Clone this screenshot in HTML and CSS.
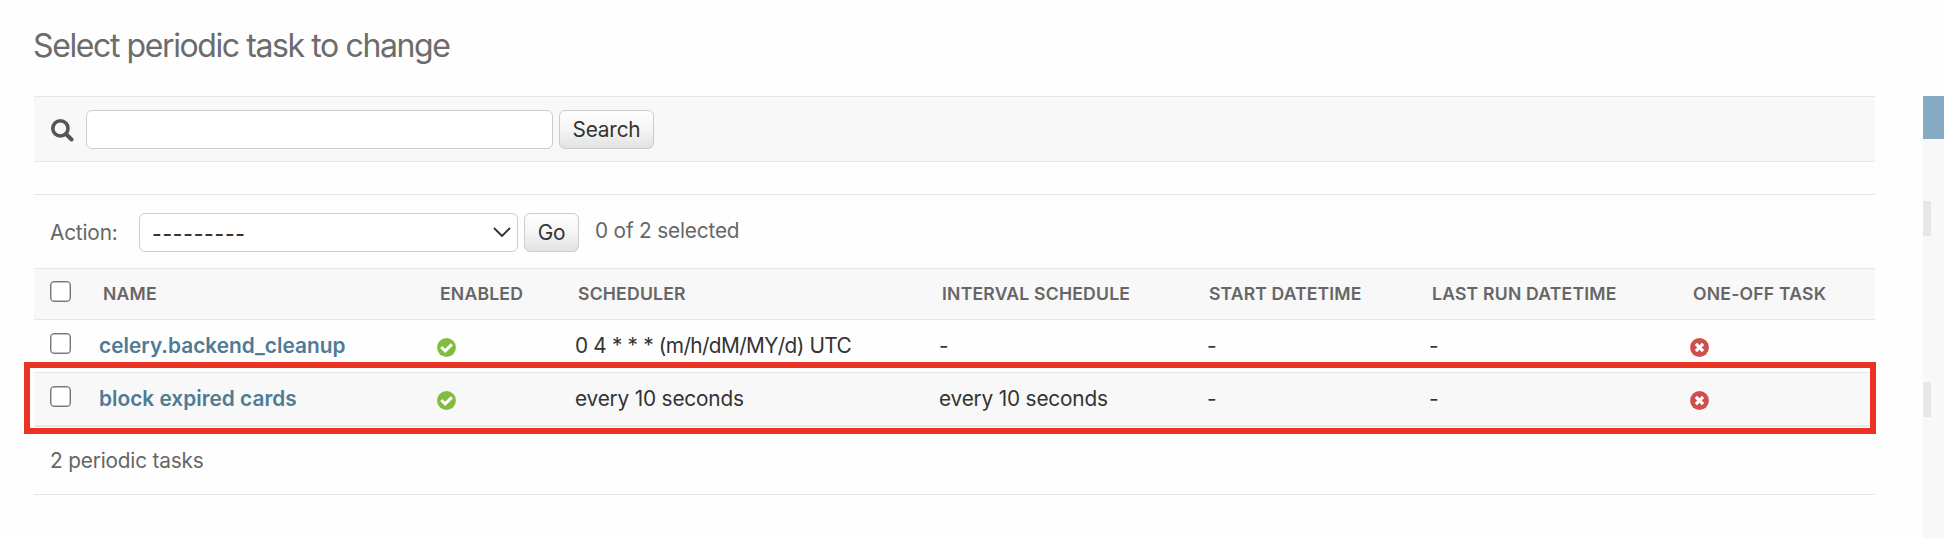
FILE: index.html
```html
<!DOCTYPE html>
<html lang="en">
<head>
<meta charset="utf-8">
<title>Select periodic task to change</title>
<link rel="stylesheet" href="styles.css">
</head>
<body>
<svg class="defs" width="0" height="0">
  <symbol id="yes" viewBox="0 0 19 19"><circle cx="9.5" cy="9.5" r="9.4" fill="#82bd41"/><path d="M4.2 9 8.2 12.9 14.8 6.4" fill="none" stroke="#fff" stroke-width="2.9"/></symbol>
  <symbol id="no" viewBox="0 0 19 19"><circle cx="9.5" cy="9.5" r="9.4" fill="#ce4f4c"/><path d="M5.9 5.9 13.1 13.1M13.1 5.9 5.9 13.1" fill="none" stroke="#fff" stroke-width="3.2"/></symbol>
</svg>
<div class="page">
  <main class="content">
    <h1><span>Select periodic task to change</span></h1>
    <form class="search">
      <svg class="lens" width="23" height="23" viewBox="0 0 23 23"><circle cx="9.4" cy="9.4" r="7.6" fill="none" stroke="#555" stroke-width="3.6"/><path d="M15 15 20.5 20.5" stroke="#555" stroke-width="4" stroke-linecap="round"/></svg>
      <input type="text" class="query">
      <button type="button" class="button find">Search</button>
    </form>
    <div class="actions">
      <span class="label">Action:</span>
      <div class="select"><span class="dashes">---------</span><svg width="18" height="10" viewBox="0 0 18 10"><path d="M1 1 9 9 17 1" fill="none" stroke="#333" stroke-width="1.9"/></svg></div>
      <button type="button" class="button go">Go</button>
      <span class="counter">0 of 2 selected</span>
    </div>
    <div class="row head">
      <i class="check"></i><span>Name</span><span>Enabled</span><span>Scheduler</span><span>Interval Schedule</span><span class="h-start">Start Datetime</span><span>Last Run Datetime</span><span>One-off Task</span>
    </div>
    <div class="row">
      <i class="check"></i><a>celery.backend_cleanup</a><svg class="state"><use href="#yes"/></svg><span class="cron">0 4 * * * (m/h/dM/MY/d) UTC</span><span>-</span><span>-</span><span>-</span><svg class="state"><use href="#no"/></svg>
    </div>
    <div class="row alt">
      <i class="check"></i><a>block expired cards</a><svg class="state"><use href="#yes"/></svg><span>every 10 seconds</span><span>every 10 seconds</span><span>-</span><span>-</span><svg class="state"><use href="#no"/></svg>
      <div class="highlight"></div>
    </div>
    <div class="paginator"><span>2 periodic tasks</span></div>
  </main>
  <aside class="filter">
    <div class="filter-title"></div>
    <div class="tab first"></div>
    <div class="tab second"></div>
  </aside>
</div>
</body>
</html>
```
FILE: styles.css
```css
* { box-sizing: border-box; }
body {
  margin: 0;
  background: #fefefe;
  color: #333;
  font: 20.8px/24px Inter, sans-serif;
  letter-spacing: -0.18px;
}
.defs { display: block; height: 0; }
.page {
  display: flex;
  justify-content: space-between;
  height: 538px;
  padding-left: 34px;
  overflow: hidden;
}
.content { width: 1841px; }
h1 {
  height: 96px;
  margin: 0;
  padding-top: 26px;
  font-size: 32px;
  font-weight: 400;
  line-height: 40px;
  letter-spacing: -1.4px;
  color: #6c6c6c;
}
h1 span { margin-left: -1px; }
.search {
  display: flex;
  height: 66px;
  padding: 13px 0 0 17px;
  border: solid #e6e6e6;
  border-width: 1px 0;
  background: #f8f8f8;
}
.lens { margin: 9px 12px 0 0; }
.query {
  width: 467px;
  height: 39px;
  border: 1px solid #ccc;
  border-radius: 6px;
  background: #fff;
}
.button {
  height: 39px;
  margin-left: 6px;
  padding: 0;
  border: 1px solid #ccc;
  border-radius: 6px;
  background: linear-gradient(#fefefe, #f5f5f5 50%, #e2e2e2);
  color: #333;
  font: inherit;
  letter-spacing: -0.2px;
}
.find { width: 95px; }
.go { width: 55px; }
.actions {
  display: flex;
  height: 74px;
  margin-top: 32px;
  padding: 18px 0 0 16px;
  border-top: 1px solid #e6e6e6;
  color: #666;
}
.label { width: 89px; padding-top: 8px; }
.select {
  display: flex;
  justify-content: space-between;
  width: 379px;
  height: 39px;
  padding: 7px 6px 0 12px;
  border: 1px solid #ccc;
  border-radius: 6px;
  background: #fff;
  color: #333;
}
.select svg { margin-top: 6px; }
.dashes { padding-top: 1px; font-weight: 500; letter-spacing: 0.8px; }
.counter { margin: 6px 0 0 16px; }
.row {
  display: grid;
  grid-template-columns: 66px 337px 138px 364px 268px 222px 261px 185px;
  position: relative;
  height: 53px;
  padding-top: 13px;
  border-top: 1px solid #e6e6e6;
  white-space: nowrap;
}
.row span, .row a { padding-top: 1px; }
.row a { margin-left: -1px; color: #4f7b94; font-weight: 600; letter-spacing: 0.03px; }
.row .cron { letter-spacing: -0.62px; word-spacing: 0.6px; }
.head {
  height: 51px;
  padding-top: 12px;
  background: #f8f8f8;
  color: #666;
  font-size: 17.6px;
  font-weight: 600;
  letter-spacing: 0.2px;
  text-transform: uppercase;
}
.head span { padding-left: 3px; }
.row .h-start { padding-left: 2px; letter-spacing: 0.12px; }
.alt {
  height: 55px;
  border-bottom: 2px solid #e6e8e9;
  background: #f8f8f8;
}
.check {
  width: 21px;
  height: 21px;
  margin-left: 16px;
  border: 1px solid #777;
  box-shadow: inset 0 0 0 0.5px #888;
  border-radius: 4px;
  background: #fff;
}
.state { width: 19px; height: 19px; margin-top: 5px; }
.highlight {
  position: absolute;
  left: -10px;
  top: -11px;
  width: 1852px;
  height: 72px;
  border: 6px solid #ea3323;
}
.paginator {
  height: 68px;
  padding: 22px 0 0 16px;
  border-bottom: 1px solid #e6e6e6;
  color: #666;
}
.filter {
  width: 21px;
  margin-top: 96px;
  background: #f8f8f8;
}
.filter-title { height: 43px; background: #84aac4; }
.tab { width: 8px; height: 35px; background: #e7e7e7; }
.first { margin-top: 62px; }
.second { margin-top: 146px; }
```
